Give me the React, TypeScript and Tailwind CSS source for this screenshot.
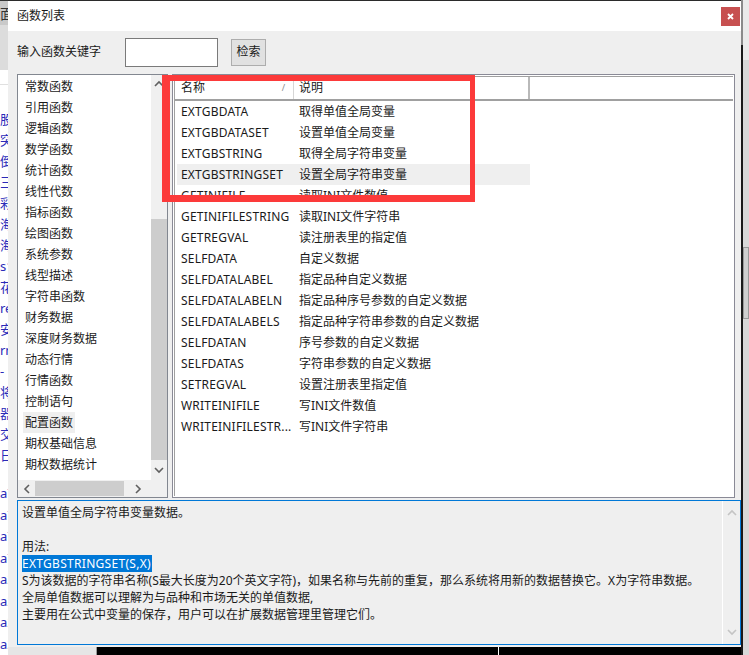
import React from 'react';

const categories = [
  '常数函数', '引用函数', '逻辑函数', '数学函数', '统计函数', '线性代数', '指标函数',
  '绘图函数', '系统参数', '线型描述', '字符串函数', '财务数据', '深度财务数据', '动态行情',
  '行情函数', '控制语句', '配置函数', '期权基础信息', '期权数据统计',
];

const funcs: [string, string][] = [
  ['EXTGBDATA', '取得单值全局变量'],
  ['EXTGBDATASET', '设置单值全局变量'],
  ['EXTGBSTRING', '取得全局字符串变量'],
  ['EXTGBSTRINGSET', '设置全局字符串变量'],
  ['GETINIFILE', '读取INI文件数值'],
  ['GETINIFILESTRING', '读取INI文件字符串'],
  ['GETREGVAL', '读注册表里的指定值'],
  ['SELFDATA', '自定义数据'],
  ['SELFDATALABEL', '指定品种自定义数据'],
  ['SELFDATALABELN', '指定品种序号参数的自定义数据'],
  ['SELFDATALABELS', '指定品种字符串参数的自定义数据'],
  ['SELFDATAN', '序号参数的自定义数据'],
  ['SELFDATAS', '字符串参数的自定义数据'],
  ['SETREGVAL', '设置注册表里指定值'],
  ['WRITEINIFILE', '写INI文件数值'],
  ['WRITEINIFILESTR...', '写INI文件字符串'],
];

const behindTop = ['股', '突', '倒', '三', '彩', '海', '海', 's1', '花', 're', '安', 'rn', '-', '将', '器', '交', '日'];
const behindBottom = ['a7', 'a7', 'a7', 'a7', 'a2', 'a2', 'a2', 'a20'];

const Chevron = ({ dir, color = '#606060' }: { dir: 'up' | 'down' | 'left' | 'right'; color?: string }) => {
  const d = {
    up: 'M1 6 L5 2 L9 6',
    down: 'M1 2 L5 6 L9 2',
    left: 'M6 1 L2 5 L6 9',
    right: 'M2 1 L6 5 L2 9',
  }[dir];
  const vert = dir === 'up' || dir === 'down';
  return (
    <svg width={vert ? 10 : 8} height={vert ? 8 : 10} viewBox={vert ? '0 0 10 8' : '0 0 8 10'}>
      <path d={d} fill="none" stroke={color} strokeWidth="1.6" />
    </svg>
  );
};

const CategoryList = () => (
  <div className="w-[151px] h-[424px] border border-[#828790] bg-white flex flex-col">
    <div className="flex flex-1 min-h-0">
      <div className="flex-1 pt-[1px] overflow-hidden">
        {categories.map((c) => (
          <div key={c} className="h-[21px] flex items-center pl-[5px]">
            <span className={`px-[2px] leading-[21px] whitespace-nowrap ${c === '配置函数' ? 'bg-[#efefef]' : ''}`}>{c}</span>
          </div>
        ))}
      </div>
      <div className="w-[16px] bg-[#f0f0f0] flex flex-col items-center">
        <div className="h-[17px] flex items-center justify-center"><Chevron dir="up" /></div>
        <div className="h-[127px]" />
        <div className="w-full h-[241px] bg-[#cdcdcd]" />
        <div className="flex-1 flex items-center justify-center"><Chevron dir="down" /></div>
      </div>
    </div>
    <div className="h-[17px] flex">
      <div className="flex-1 bg-[#f0f0f0] flex items-center">
        <div className="w-[17px] flex justify-center"><Chevron dir="left" /></div>
        <div className="w-[89px] h-[15px] bg-[#cdcdcd]" />
        <div className="flex-1 flex justify-center"><Chevron dir="right" /></div>
      </div>
      <div className="w-[16px] bg-[#f0f0f0]" />
    </div>
  </div>
);

const FunctionList = () => (
  <div className="w-[563px] h-[424px] border border-[#8a8a96] p-[1px] bg-white">
    <div className="h-full border-l border-t border-[#a0a0a0] bg-white flex flex-col">
      <div className="h-[24px] flex items-stretch border-b-2 border-[#a0a0a0] pl-[2px]">
        <div className="w-[117px] flex items-center justify-between pl-[4px] pr-[8px] border-r border-[#d6d6d6]">
          <span>名称</span>
          <span className="text-[9px] text-[#8a8a8a]">/</span>
        </div>
        <div className="w-[236px] flex items-center pl-[5px] border-r-2 border-[#b9b9b9]">说明</div>
        <div className="flex-1" />
      </div>
      <div className="pl-[2px]">
        {funcs.map(([name, desc], i) => (
          <div key={name} className={`h-[21px] w-[353px] flex items-center ${i === 3 ? 'bg-[#efefef]' : ''}`}>
            <div className="w-[117px] pl-[4px] whitespace-nowrap tracking-[0.2px]">{name}</div>
            <div className="pl-[5px] whitespace-nowrap">{desc}</div>
          </div>
        ))}
      </div>
    </div>
  </div>
);

const Description = () => (
  <div className="w-[724px] h-[145px] mt-[2px] border border-[#0078d7] bg-[#efefef] flex">
    <div className="flex-1 pl-[4px] pt-[3px] leading-[17px] whitespace-nowrap">
      <div>设置单值全局字符串变量数据。</div>
      <div>&nbsp;</div>
      <div>用法:</div>
      <div><span className="bg-[#0078d7] text-white pr-[1px] tracking-[0.3px]">EXTGBSTRINGSET(S,X)</span></div>
      <div>S为该数据的字符串名称(S最大长度为20个英文字符)，如果名称与先前的重复，那么系统将用新的数据替换它。X为字符串数据。</div>
      <div>全局单值数据可以理解为与品种和市场无关的单值数据,</div>
      <div>主要用在公式中变量的保存，用户可以在扩展数据管理里管理它们。</div>
    </div>
    <div className="w-[18px] border-l border-white flex flex-col items-center justify-between py-[8px]">
      <Chevron dir="up" color="#c4c4c4" />
      <Chevron dir="down" color="#c4c4c4" />
    </div>
  </div>
);

export default function App() {
  return (
    <div className="w-[749px] h-[655px] flex overflow-hidden bg-[#d4d4d4] text-[12px] text-[#1a1a1a] font-['Noto_Sans','Noto_Sans_CJK_SC',sans-serif]">
      {/* app behind, left edge */}
      <div className="w-[8px] flex flex-col border-t border-[#333] overflow-hidden bg-white">
        <div className="h-[30px] bg-[#c9c9c9] flex items-center text-[14px] text-[#333]">面</div>
        <div className="h-[56px] bg-[#dcdcdc]" />
        <div className="h-[18px] border-b border-[#e0e0e0]" />
        <div className="pt-[24px] text-[#2a2ab8] text-[13px] leading-[21px]">
          {behindTop.map((t, i) => <div key={i}>{t}</div>)}
        </div>
        <div className="pt-[17px] text-[#2a2ab8] text-[13px] leading-[21.5px]">
          {behindBottom.map((t, i) => <div key={i}>{t}</div>)}
        </div>
      </div>

      <div className="w-[733px] flex flex-col">
        {/* dialog */}
        <div className="relative h-[647px] bg-[#efefef] border-t border-[#2b2b2b] flex flex-col">
          <div className="h-[30px] bg-white flex items-center justify-between pl-[9px]">
            <span>函数列表</span>
            <div className="w-[19px] h-[19px] bg-[#c75050] flex items-center justify-center mr-[1px]">
              <svg width="7" height="7" viewBox="0 0 7 7">
                <path d="M1 1 L6 6 M6 1 L1 6" stroke="white" strokeWidth="1.8" />
              </svg>
            </div>
          </div>
          <div className="h-[42px] flex items-center pl-[9px]">
            <span className="w-[108px]">输入函数关键字</span>
            <div className="w-[93px] h-[29px] bg-white border border-[#7a7a7a]" />
            <button className="ml-[13px] w-[35px] h-[27px] bg-[#e1e1e1] border border-[#adadad] flex items-center justify-center">检索</button>
          </div>
          <div className="flex gap-[4px] pl-[9px] mt-[1px]">
            <CategoryList />
            <FunctionList />
          </div>
          <div className="pl-[9px]">
            <Description />
          </div>

          {/* annotation */}
          <div className="absolute left-[154px] top-[74px] w-[313px] h-[127px] border-t-[6px] border-l-[8px] border-r-[5px] border-b-[7px] border-[#fc3a3a]" />
        </div>
        {/* app behind, bottom */}
        <div className="h-[8px] flex">
          <div className="w-[89px] bg-[#e6e6e6] border-r border-[#999]" />
          <div className="w-[402px] bg-black border-r border-white" />
          <div className="flex-1 bg-black" />
        </div>
      </div>

      {/* app behind, right edge */}
      <div className="w-[8px] flex">
        <div className="w-[2px] flex flex-col">
          <div className="h-[45px] bg-[#8a8a8a]" />
          <div className="flex-1 bg-[#1a1a1a]" />
        </div>
        <div className="flex-1 flex flex-col bg-[#d8d8d8]">
          <div className="h-[60px] bg-[#eaeaea]" />
          <div className="h-[187px]" />
          <div className="h-[72px] border border-[#9a9a9a] bg-[#cfcfcf]" />
          <div className="flex-1" />
        </div>
      </div>
    </div>
  );
}
